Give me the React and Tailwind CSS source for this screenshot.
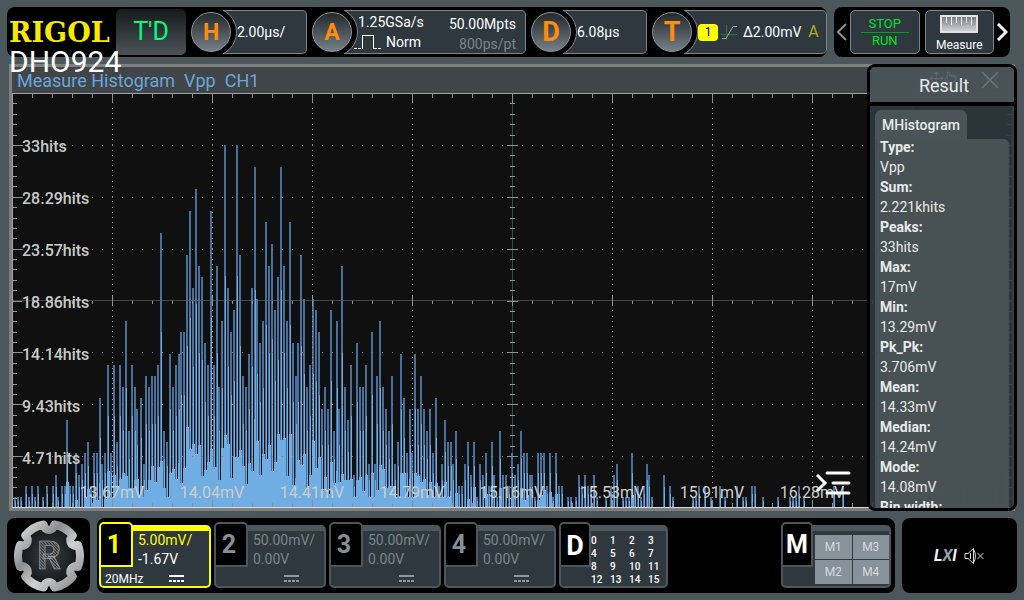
import React, { useState } from 'react';
import { Move, Pointer } from 'lucide-react';

const PLOT_W = 1000;
const PLOT_H = 415;
const HIT_PX = 11;

// Runs of neighbouring bins, 3 units apart, with the hit count of each bin
const RUNS = [
  [2, [1, 1, 1]], [13, [2, 1, 2, 1, 2]], [30, [1]], [34, [2]], [40, [2, 3]], [45, [1]], [49, [2, 2]],
  [54, [8, 2, 2, 5, 3, 4, 5, 6, 2, 5, 5, 10]],
  [89, [4, 5, 13, 5, 13, 6, 13, 11, 17, 7, 13, 11]],
  [124, [9]], [128, [10, 4]],
  [133, [12, 11, 12, 12, 13, 25, 7, 6, 14, 11, 13, 14]],
  [168, [16, 16, 23, 27, 20, 29, 22, 21, 15, 13, 27, 13, 22]],
  [206, [11, 17, 33, 20, 16, 18, 33, 23, 12, 11, 14, 20, 31]],
  [244, [19, 15, 17, 26, 22, 24, 18, 21, 31, 22, 17, 26, 15, 12]],
  [285, [15, 23, 19, 11, 13, 19, 18, 16, 9, 11, 9, 18, 7, 17]],
  [326, [9, 22, 11, 8, 13, 3, 15, 11, 11, 13, 4, 16, 4]],
  [364, [12, 17, 11, 9, 7, 12, 4, 6, 14, 10, 5, 9]],
  [399, [5, 14, 9, 12, 9, 7, 9, 5, 10, 2, 4, 8, 6, 6]],
  [440, [4, 7, 2, 2, 4, 6, 3, 6, 1, 4, 3, 5, 2, 6]],
  [481, [3, 1, 7, 3, 3, 2, 5, 3, 4, 7, 5, 5, 3]],
  [519, [3, 1, 5, 5, 5, 2, 5, 1, 5, 2, 2]],
  [555, [1, 1]], [563, [1, 3, 2, 3, 2, 2, 3, 1]], [593, [1]], [598, [2, 3, 4]],
  [610, [1, 1, 1, 5, 2, 2, 1, 2, 4]], [636, [3, 1]], [651, [3]], [657, [2, 1]],
  [680, [1, 1, 2]], [692, [2]], [698, [1]], [707, [2]], [712, [1]], [724, [2]],
  [730, [1, 1]], [739, [2, 2]], [750, [1]], [765, [1]], [777, [1, 1, 1, 2]],
  [791, [1]], [821, [2]], [830, [2]], [950, [2]], [983, [2]], [994, [3]],
];

const BINS = RUNS.flatMap(([from, hits]) => hits.map((n, i) => ({ x: from + i * 3, n })));

const Y_LABELS = ['33hits', '28.29hits', '23.57hits', '18.86hits', '14.14hits', '9.43hits', '4.71hits'];
const X_LABELS = ['13.67mV', '14.04mV', '14.41mV', '14.79mV', '15.16mV', '15.53mV', '15.91mV', '16.28mV', '16.65mV'];

const RESULTS = [
  ['Type:', 'Vpp'],
  ['Sum:', '2.221khits'],
  ['Peaks:', '33hits'],
  ['Max:', '17mV'],
  ['Min:', '13.29mV'],
  ['Pk_Pk:', '3.706mV'],
  ['Mean:', '14.33mV'],
  ['Median:', '14.24mV'],
  ['Mode:', '14.08mV'],
  ['Bin width:', ''],
];

const rowY = (k) => Math.round((k * PLOT_H) / 8);

const Histogram = () => {
  const grid = [];
  for (let i = 1; i < 10; i++) {
    const x = i * 100;
    if (i !== 5) {
      grid.push(<path key={`v${i}`} d={`M${x + 0.5} 15V${PLOT_H}`} stroke="#969a9a" strokeDasharray="1 4.19" />);
    }
  }
  for (let k = 1; k < 8; k++) {
    if (k !== 4) {
      grid.push(<path key={`h${k}`} d={`M10 ${rowY(k) + 0.5}H${PLOT_W}`} stroke="#7a7e7e" strokeDasharray="1 9" />);
    }
  }

  let ticks = '';
  for (let i = 1; i < 50; i++) {
    const x = i * 20 + 0.5;
    const major = i % 5 === 0;
    ticks += `M${x} 0v${major ? 10 : 5}M${x} ${PLOT_H}v${major ? -8 : -5}M${x} ${rowY(4) - (major ? 5 : 0)}v${major ? 10 : 3}`;
  }
  for (let i = 1; i < 40; i++) {
    const y = Math.round((i * PLOT_H) / 40) + 0.5;
    const major = i % 5 === 0;
    ticks += `M0 ${y}h${major ? 10 : 5}M${PLOT_W} ${y}h${major ? -10 : -5}M${major ? 495 : 498} ${y}h${major ? 11 : 5}`;
  }

  return (
    <svg viewBox={`0 0 ${PLOT_W} ${PLOT_H}`} className="block h-auto w-full bg-[#101010]" role="img" aria-label="Histogram">
      <g shapeRendering="crispEdges">
        <path d={`M0 ${rowY(4) - 0.5}H${PLOT_W}M500.5 0V${PLOT_H}`} stroke="#3e4747" />
        {BINS.map(({ x, n }) => {
          const h = n * HIT_PX;
          const mid = Math.round(h * 0.64);
          const low = n > 4 ? Math.round(h * (0.14 + (x % 7) * 0.03)) : 0;
          return (
            <g key={x}>
              <rect x={x} y={PLOT_H - h} width="2" height={h} fill="#48709a" />
              <rect x={x + 1} y={PLOT_H - mid} width="1" height={mid} fill="#70ade2" />
              <rect x={x} y={PLOT_H - low} width="3" height={low} fill="#70ade2" />
            </g>
          );
        })}
        <rect x="98" y={PLOT_H - 11} width="336" height="11" fill="#70ade2" />
        {grid}
        <path d={ticks} stroke="#8c9191" fill="none" />
        <path d={`M0 .5H${PLOT_W}M.5 0V${PLOT_H}`} stroke="#a0a4a4" />
        <path d={`M0 ${PLOT_H - 0.5}H${PLOT_W}`} stroke="#d4dadd" />
      </g>
      <g className="font-[Roboto,sans-serif] text-[16px] font-medium" fill="#c8caca">
        {Y_LABELS.map((t, i) => (
          <text key={t} x="10" y={(i + 1) * 52 + 7}>{t}</text>
        ))}
      </g>
      <g className="font-[Roboto,sans-serif] text-[16px]" fill="#cdcdcd">
        {X_LABELS.map((t, i) => (
          <text key={t} x={(i + 1) * 100} y="405" textAnchor="middle">{t}</text>
        ))}
      </g>
    </svg>
  );
};

const Knob = ({ letter, large, className, children }) => (
  <div className={`flex items-center ${className}`}>
    <button
      className={`relative z-10 size-10 shrink-0 rounded-full border border-[#8b9296] bg-linear-to-b from-[#25292b] to-[#75818a] leading-none font-bold text-[#ff8c0a] ${
        large ? 'text-[27px]' : 'text-[23px]'
      }`}
    >
      {letter}
    </button>
    <div className="relative -ml-2 h-11 flex-1 overflow-hidden rounded-r-[5px] border border-l-0 border-[#7b878c] bg-[#2e383e] pl-[14px]">
      <span className="absolute -top-1 -left-[36px] size-[50px] rounded-full border border-[#7b878c] bg-black" />
      <div className="relative flex h-full items-center">{children}</div>
    </div>
  </div>
);

const DcIcon = ({ className }) => (
  <svg width="16" height="8" viewBox="0 0 16 8" className={className} aria-hidden="true" shapeRendering="crispEdges">
    <path d="M0 1H15" stroke="currentColor" strokeWidth="2" />
    <path d="M0 6H15" stroke="currentColor" strokeWidth="2" strokeDasharray="3 1" />
  </svg>
);

const Channel = ({ id, scale, offset, bandwidth, active }) => (
  <button
    className={`relative mt-[7px] h-[63px] w-28 rounded-[5px] border-2 border-t-[6px] bg-[#2e383e] text-left ${
      active ? 'border-[#ffff00]' : 'border-[#4b575b]'
    }`}
  >
    <span
      className={`absolute -top-[9px] -left-[2px] flex h-[45px] w-[34px] items-center justify-center rounded-t-[5px] border-2 bg-black pr-1 text-[25px] font-bold ${
        active ? 'border-[#ffff00] text-[#ffff00]' : 'border-[#4b575b] text-[#858f96]'
      }`}
    >
      {id}
    </span>
    <span className={`block pl-[37px] text-[14px] leading-[19px] ${active ? 'text-[#ffff00]' : 'text-[#7b858b]'}`}>
      {scale}
    </span>
    <span className={`block pl-[37px] text-[14px] leading-[19px] ${active ? 'text-white' : 'text-[#7b858b]'}`}>
      {offset}
    </span>
    <span className={`flex h-[17px] items-center pt-[2px] pl-1 text-[12px] ${active ? 'text-white' : 'text-[#8c969c]'}`}>
      <span className="w-16">{bandwidth}</span>
      <DcIcon />
    </span>
  </button>
);

// Centre line of the ring: six lobes with a dent between each two
const gearPath = () => {
  const at = (deg, r) => {
    const a = (deg * Math.PI) / 180;
    return `${(35 + r * Math.cos(a)).toFixed(2)} ${(35 + r * Math.sin(a)).toFixed(2)}`;
  };
  let d = `M${at(-20, 31)}`;
  for (let i = 0; i < 6; i++) {
    const c = i * 60;
    d += `A31 31 0 0 1 ${at(c + 20, 31)}L${at(c + 22, 27)}Q${at(c + 30, 24)} ${at(c + 38, 27)}L${at(c + 40, 31)}`;
  }
  return `${d}Z`;
};

const GearLogo = () => (
  <svg width="70" height="72" viewBox="0 0 70 70" preserveAspectRatio="none" aria-hidden="true">
    <defs>
      <linearGradient id="steel" x1="0" y1="0" x2="1" y2="1">
        <stop offset="0" stopColor="#e4e4e6" />
        <stop offset="0.35" stopColor="#8b8d90" />
        <stop offset="0.6" stopColor="#d0d1d3" />
        <stop offset="1" stopColor="#85878a" />
      </linearGradient>
      <radialGradient id="core">
        <stop offset="0" stopColor="#3a3f42" />
        <stop offset="1" stopColor="#131516" />
      </radialGradient>
      <pattern id="weave" width="3" height="3" patternUnits="userSpaceOnUse">
        <rect width="3" height="3" fill="#34373a" />
        <path d="M0 0L3 3" stroke="#8e9193" strokeWidth="0.8" />
      </pattern>
    </defs>
    <path d={gearPath()} fill="url(#core)" stroke="url(#steel)" strokeWidth="8" strokeLinejoin="round" />
    <text x="35" y="48" textAnchor="middle" fontFamily="Roboto, sans-serif" fontSize="37" fontWeight="700" fill="url(#weave)" stroke="#a9acae" strokeWidth="0.6">
      R
    </text>
  </svg>
);

const ResultPanel = ({ onClose }) => (
  <aside className="absolute -top-[3px] -right-[5px] -bottom-[3px] flex w-[150px] flex-col overflow-hidden rounded-lg border-[3px] border-black bg-[#2e383e]/90 text-[#e8eaea]">
    <div className="relative flex h-[39px] shrink-0 items-center justify-center border-b-4 border-black bg-[#4d575a]/90">
      <div className="absolute top-1 left-[59px] flex text-[#5c6669]" aria-hidden="true">
        <Move size={15} />
        <Pointer size={13} />
      </div>
      <h2 className="relative pt-[2px] pl-1 text-[18px] leading-6">Result</h2>
      <button onClick={onClose} aria-label="Close" className="absolute top-[3px] right-[14px] text-[#70797c]">
        <svg width="20" height="20" viewBox="0 0 20 20" fill="none" stroke="currentColor" strokeWidth="1.2">
          <path d="M2 2L18 18M18 2L2 18" />
        </svg>
      </button>
    </div>
    <div className="flex min-h-0 flex-1 flex-col px-[5px] pt-1">
      <button className="h-[29px] w-[92px] shrink-0 rounded-t-md bg-[#4a5456] pt-[2px] text-[14px] font-medium">MHistogram</button>
      <dl className="min-h-0 flex-1 overflow-hidden rounded-tr-md bg-[#4a5456]/95 pl-[5px] text-[14px] leading-5">
        <div className="-mt-[2px]">
          {RESULTS.map(([name, value]) => (
            <div key={name}>
              <dt className="font-bold">{name}</dt>
              <dd>{value}</dd>
            </div>
          ))}
        </div>
      </dl>
    </div>
  </aside>
);

const App = () => {
  const [showResult, setShowResult] = useState(true);

  return (
    <div className="flex min-h-screen flex-col gap-[7px] bg-[#4b575b] py-[7px] font-[Roboto,sans-serif] text-white">
      <header className="flex h-[50px] gap-[7px] pr-[14px] pl-[7px]">
        <div className="flex flex-1 items-center rounded-lg bg-black">
          <div className="relative z-20 h-full w-[109px] shrink-0">
            <span className="absolute top-[6px] left-[2px] font-['DejaVu_Serif'] text-[27px] leading-10 font-bold text-[#f5ea00]">RIGOL</span>
            <span className="absolute top-[38px] left-[2px] text-[30px] leading-[34px]">DHO924</span>
          </div>
          <button className="h-[46px] w-[70px] shrink-0 rounded-[5px] bg-linear-to-b from-[#181a1b] to-[#4b5559] text-[25px] text-[#00ff80]">
            T'D
          </button>
          <div className="ml-[5px] flex flex-1 gap-[5px]">
            <Knob letter="H" className="w-[116px]">
              <span className="text-[14px]">2.00µs/</span>
            </Knob>
            <Knob letter="A" className="w-[214px]">
              <div className="-ml-1 flex flex-1 items-center justify-between pr-[9px] text-[14px] leading-5">
                <div>
                  <div className="pl-1">1.25GSa/s</div>
                  <div className="flex items-center gap-1">
                    <svg width="28" height="16" viewBox="0 0 28 16" fill="none" stroke="#fff" shapeRendering="crispEdges" aria-hidden="true">
                      <path d="M0 14.5H8.5M19.5 14.5H28" strokeDasharray="3 1" />
                      <path d="M8.5 15V1.5H19.5V15" />
                    </svg>
                    Norm
                  </div>
                </div>
                <div className="pt-1 text-right">
                  <div>50.00Mpts</div>
                  <div className="text-[#7b858b]">800ps/pt</div>
                </div>
              </div>
            </Knob>
            <Knob letter="D" large className="w-[116px]">
              <span className="text-[14px]">6.08µs</span>
            </Knob>
            <Knob letter="T" large className="flex-1">
              <span className="flex h-[17px] w-5 items-center justify-center rounded-[4px] bg-[#ffff00] text-[12px] text-black">1</span>
              <svg width="17" height="17" viewBox="0 0 17 17" className="mx-[3px]" fill="none" aria-hidden="true">
                <path d="M5.5 1V16M0 10.5H16" stroke="#21784a" />
                <path d="M1 14.5H5L12 2.5H16" stroke="#9da6aa" />
              </svg>
              <span className="ml-[2px] text-[14px]">Δ2.00mV</span>
              <span className="ml-[7px] text-[16px] text-[#b0ac1e]">A</span>
            </Knob>
          </div>
        </div>

        <div className="flex w-44 items-center rounded-lg bg-black px-[2px]">
          <button aria-label="Previous" className="text-[#8b9498]">
            <svg width="12" height="18" viewBox="0 0 12 18" fill="none" stroke="currentColor" strokeWidth="2">
              <path d="M10 1L2 9L10 17" />
            </svg>
          </button>
          <button className="ml-[2px] flex h-11 w-[70px] flex-col items-center justify-center rounded-[5px] border border-[#7b878c] bg-[#2e383e] text-[13px] leading-4 text-[#00e626]">
            <span className="w-12 border-b border-[#00a01c]">STOP</span>
            <span>RUN</span>
          </button>
          <button className="mr-[2px] ml-[5px] flex h-11 w-[70px] flex-col items-center justify-end rounded-[5px] border border-[#7b878c] bg-[#2e383e] text-[12px] leading-4">
            <svg width="38" height="18" viewBox="0 0 38 18" aria-hidden="true">
              <defs>
                <linearGradient id="ruler" x1="0" y1="0" x2="0" y2="1">
                  <stop offset="0" stopColor="#70787b" />
                  <stop offset="1" stopColor="#d5d8da" />
                </linearGradient>
              </defs>
              <rect x="1" y="1" width="36" height="16" fill="url(#ruler)" stroke="#e0e2e3" strokeWidth="2" />
              <path d="M6.5 2V8M11.5 2V10M16.5 2V8M21.500 2V10M26.500 2V8M31.500 2V10" stroke="#eef0f1" />
            </svg>
            <span className="mt-1">Measure</span>
          </button>
          <button aria-label="Next">
            <svg width="12" height="18" viewBox="0 0 12 18" fill="none" stroke="currentColor" strokeWidth="3">
              <path d="M2 1L10 9L2 17" />
            </svg>
          </button>
        </div>
      </header>

      <main className="relative mx-[9px] border-[3px] border-[#7f7f7f]">
        <h1 className="h-[26px] bg-[#404547] pl-[5px] text-[18px] leading-7 whitespace-pre text-[#6ba6de]">
          {'Measure Histogram  Vpp  CH1'}
        </h1>
        <Histogram />
        <button aria-label="Open list" className="absolute right-[160px] bottom-[11px]">
          <svg width="37" height="28" viewBox="0 0 37 28" fill="none" stroke="#fff" strokeLinecap="round">
            <path d="M2 6L10 14L2 22" strokeWidth="3" strokeLinecap="butt" />
            <path d="M12 4H34M18 14H34M12 24H34" strokeWidth="3" />
          </svg>
        </button>
        {showResult && <ResultPanel onClose={() => setShowResult(false)} />}
      </main>

      <footer className="flex h-[75px] gap-[7px] px-[7px]">
        <button aria-label="Home" className="flex w-[83px] shrink-0 items-center justify-center rounded-lg bg-black">
          <GearLogo />
        </button>

        <div className="flex flex-1 gap-[3px] rounded-lg bg-black px-[2px]">
          <Channel id="1" scale="5.00mV/" offset="-1.67V" bandwidth="20MHz" active />
          <Channel id="2" scale="50.00mV/" offset="0.00V" />
          <Channel id="3" scale="50.00mV/" offset="0.00V" />
          <Channel id="4" scale="50.00mV/" offset="0.00V" />
          <button className="relative mt-[7px] h-[63px] w-[109px] rounded-[5px] border-2 border-t-[6px] border-[#4b575b] bg-[#2e383e]">
            <span className="absolute -top-[9px] -left-[2px] flex h-[45px] w-8 items-center justify-center rounded-t-[5px] border-2 border-[#4b575b] bg-black pt-1 text-[27px] font-bold">
              D
            </span>
            <span className="grid grid-cols-[19px_19px_19px_19px] pt-[2px] pl-[30px] text-left text-[10px] leading-[13px] font-medium">
              {Array.from({ length: 16 }, (_, i) => (
                <span key={i}>{i}</span>
              ))}
            </span>
          </button>
          <button className="relative mt-[7px] mr-[2px] ml-auto flex h-[63px] w-[110px] justify-end rounded-[5px] border-2 border-t-[6px] border-[#4b575b] bg-[#2e383e]">
            <span className="absolute -top-[9px] -left-[2px] flex h-[45px] w-8 items-center justify-center rounded-t-[5px] border-2 border-[#4b575b] bg-black text-[25px] font-bold">
              M
            </span>
            <span className="mt-1 grid h-[49px] w-[74px] grid-cols-2 gap-px text-[12px] text-[#d5dade]">
              {['M1', 'M3', 'M2', 'M4'].map((m) => (
                <span key={m} className="flex items-center justify-center bg-[#87929a]">{m}</span>
              ))}
            </span>
          </button>
        </div>

        <div className="flex w-[115px] shrink-0 items-center justify-center gap-[7px] rounded-lg bg-black">
          <span className="text-[16px] font-bold text-[#f0f2f3] italic">
            L<span className="text-[#9a9fa2]">X</span>I
          </span>
          <button aria-label="Mute">
            <svg width="21" height="18" viewBox="0 0 21 18" fill="none" stroke="#d8dadb">
              <path d="M1 6.5H4L9.500 1.500V16.500L4 11.500H1Z" />
              <path d="M6.500 6V12M9.500 2.500C12 5 12 13 9.500 15.500M13.500 6L19.500 12M19.500 6L13.500 12" />
            </svg>
          </button>
        </div>
      </footer>
    </div>
  );
};

export default App;
